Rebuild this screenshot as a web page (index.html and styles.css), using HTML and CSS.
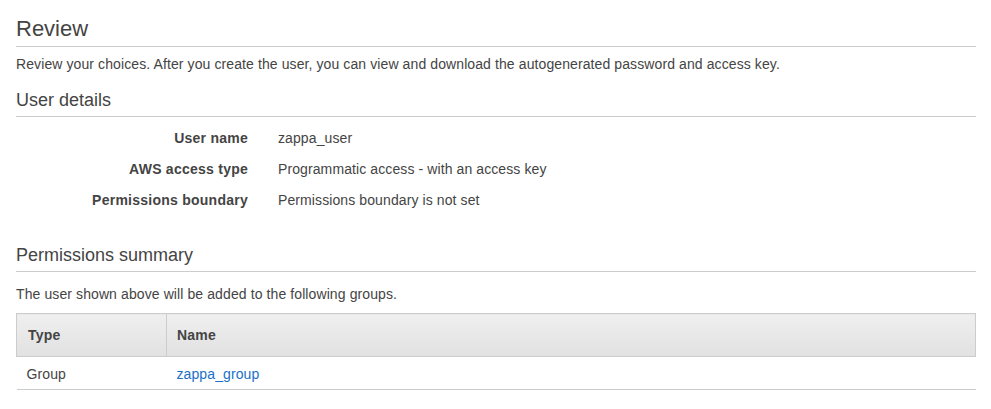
FILE: index.html
```html
<!DOCTYPE html>
<html lang="en">
<head>
<meta charset="utf-8">
<title>Review</title>
<link rel="stylesheet" href="styles.css">
</head>
<body>
<main class="page">
  <h1 class="page-title">Review</h1>
  <p class="intro">Review your choices. After you create the user, you can view and download the autogenerated password and access key.</p>

  <h2 class="section-title">User details</h2>
  <dl class="details">
    <dt>User name</dt><dd>zappa_user</dd>
    <dt>AWS access type</dt><dd>Programmatic access - with an access key</dd>
    <dt>Permissions boundary</dt><dd>Permissions boundary is not set</dd>
  </dl>

  <h2 class="section-title section-gap">Permissions summary</h2>
  <p class="summary-text">The user shown above will be added to the following groups.</p>
  <table class="groups">
    <thead>
      <tr><th class="col-type">Type</th><th>Name</th></tr>
    </thead>
    <tbody>
      <tr><td>Group</td><td><a href="#" class="link">zappa_group</a></td></tr>
    </tbody>
  </table>
</main>
</body>
</html>
```

FILE: styles.css
```css
* { box-sizing: border-box; }

html, body {
  margin: 0;
  padding: 0;
  background: #fff;
}

body {
  font-family: "Liberation Sans", Arial, sans-serif;
  font-size: 14px;
  line-height: 20px;
  color: #444;
  letter-spacing: 0.1px;
}

.page {
  width: 991px;
  padding: 16px 15px 0 16px;
}

.page-title {
  margin: 0;
  font-size: 22px;
  line-height: 26px;
  font-weight: normal;
  color: #444;
  letter-spacing: 0;
  padding-bottom: 4px;
  border-bottom: 1px solid #ccc;
}

.intro {
  margin: 7px 0 0;
}

.section-title {
  margin: 15px 0 0;
  font-size: 18px;
  line-height: 22px;
  font-weight: normal;
  color: #444;
  letter-spacing: 0;
  padding-bottom: 5px;
  border-bottom: 1px solid #ccc;
}

.section-gap {
  margin-top: 34px;
}

.details {
  display: grid;
  grid-template-columns: 232px 1fr;
  column-gap: 30px;
  row-gap: 11px;
  margin: 11px 0 0;
}

.details dt {
  font-weight: bold;
  text-align: right;
  letter-spacing: 0.25px;
}

.details dd {
  margin: 0;
}

.summary-text {
  margin: 12px 0 0;
}

.groups {
  width: 100%;
  margin-top: 9px;
  border-collapse: collapse;
}

.groups th {
  text-align: left;
  font-weight: bold;
  letter-spacing: 0.2px;
  height: 43px;
  padding: 0 10px;
  background: linear-gradient(#efefef, #e1e1e1);
  border: 1px solid #ccc;
}

.groups .col-type {
  width: 150px;
  padding-left: 11px;
}

.groups td {
  height: 33px;
  padding: 1px 10px 0;
  border-bottom: 1px solid #ccc;
}

.link {
  color: #1a6fc6;
  text-decoration: none;
}
```
